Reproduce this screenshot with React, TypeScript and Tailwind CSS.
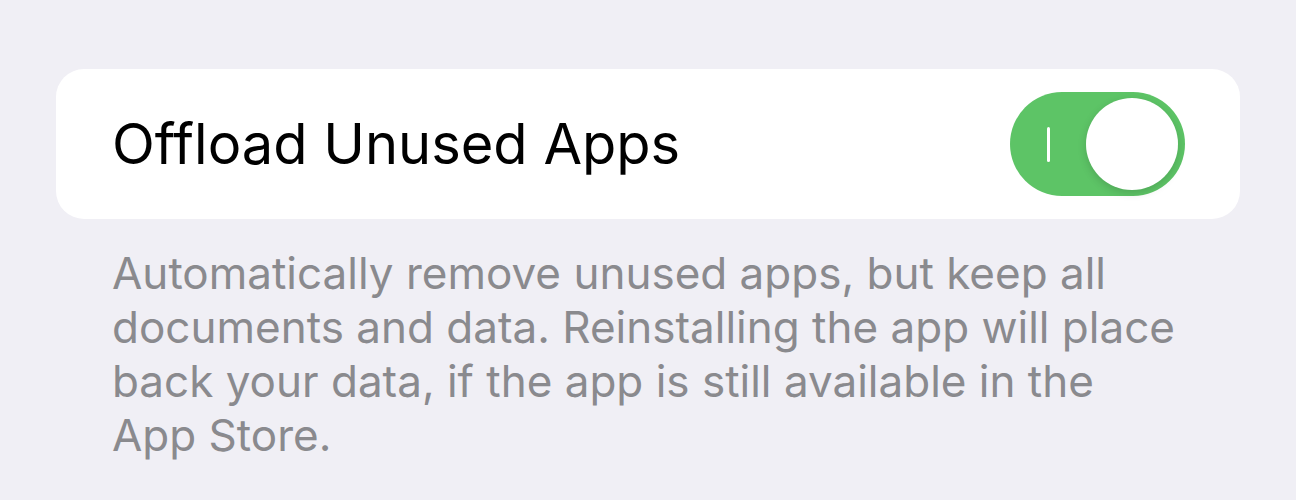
export default function App() {
  return (
    <div className="w-[1296px] h-[500px] bg-[#f0eff5] overflow-hidden" style={{ fontFamily: "Inter, 'Noto Sans', sans-serif" }}>
      <div className="pt-[69px] px-[56px]">
        <div className="h-[150px] bg-white rounded-[28px] flex items-center justify-between pl-[56px] pr-[55px]">
          <div className="text-[56px] text-black tracking-[0px]">Offload Unused Apps</div>
          <div className="w-[175px] h-[104px] rounded-full bg-[#5dc466] flex items-center justify-between pl-[37px] pr-[7px]">
            <div className="w-[3px] h-[35px] bg-white rounded-sm" />
            <div className="w-[92px] h-[92px] rounded-full bg-white shadow-[0_3px_8px_rgba(0,0,0,0.15)]" />
          </div>
        </div>
        <div className="pl-[56px] pt-[27px] text-[44px] leading-[54px] text-[#8a8a8e] whitespace-nowrap">
          Automatically remove unused apps, but keep all<br />
          documents and data. Reinstalling the app will place<br />
          back your data, if the app is still available in the<br />
          App Store.
        </div>
      </div>
    </div>
  );
}
